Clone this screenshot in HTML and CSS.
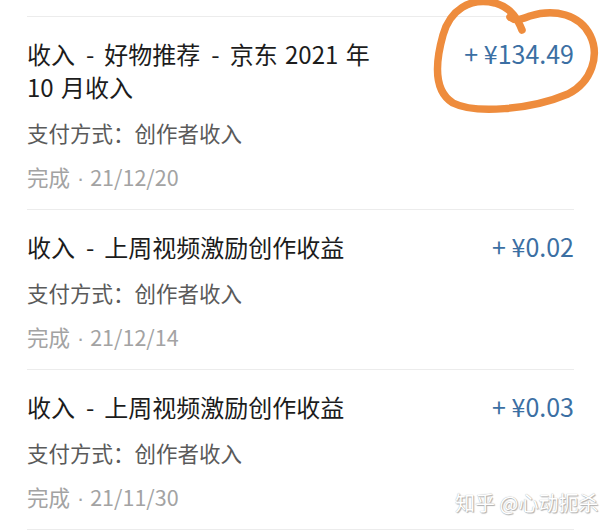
FILE: index.html
```html
<!DOCTYPE html>
<html lang="zh-CN">
<head>
<meta charset="utf-8">
<link rel="stylesheet" href="styles.css">
</head>
<body>
<div class="page">
  <ul class="list">
    <li class="item">
      <div class="row">
        <div class="title">收入<span class="sep">-</span>好物推荐<span class="sep">-</span>京东 2021 年<br>10 月收入</div>
        <div class="amount">+ ¥134.49</div>
      </div>
      <div class="sub">支付方式：创作者收入</div>
      <div class="date">完成<span class="dot">·</span>21/12/20</div>
    </li>
    <li class="item">
      <div class="row">
        <div class="title">收入<span class="sep">-</span>上周视频激励创作收益</div>
        <div class="amount">+ ¥0.02</div>
      </div>
      <div class="sub">支付方式：创作者收入</div>
      <div class="date">完成<span class="dot">·</span>21/12/14</div>
    </li>
    <li class="item">
      <div class="row">
        <div class="title">收入<span class="sep">-</span>上周视频激励创作收益</div>
        <div class="amount">+ ¥0.03</div>
      </div>
      <div class="sub">支付方式：创作者收入</div>
      <div class="date">完成<span class="dot">·</span>21/11/30</div>
    </li>
  </ul>
  <svg class="scribble" width="600" height="120" viewBox="0 0 600 120">
    <path d="M 522 30 C 518 20, 512 8, 495 3 C 470 -3, 450 10, 443 35 C 436 60, 432 90, 453 103 C 475 114, 530 110, 568 94 C 592 82, 600 55, 590 35 C 580 15, 555 8, 530 16 C 522 19, 516 22, 510 17" fill="none" stroke="#ee8c3d" stroke-width="7.5" stroke-linecap="round" stroke-linejoin="round"/>
  </svg>
  <div class="watermark">知乎 @心动扼杀</div>
</div>
</body>
</html>
```
FILE: styles.css
```css
* { box-sizing: border-box; }
html, body {
  margin: 0;
  padding: 0;
  background: #ffffff;
}
body {
  font-family: "Noto Sans CJK SC", "Noto Sans", sans-serif;
  width: 600px;
  height: 530px;
  overflow: hidden;
}
.page {
  position: relative;
  width: 600px;
  height: 530px;
  padding: 16px 26px 0 27px;
}
.list {
  list-style: none;
  margin: 0;
  padding: 0;
  border-top: 1px solid #ececec;
}
.item {
  padding: 20px 0 10px;
  border-bottom: 1px solid #ececec;
}
.row {
  display: flex;
  justify-content: space-between;
  align-items: flex-start;
}
.title {
  font-size: 24px;
  line-height: 33px;
  color: #1c1c1c;
  word-spacing: 2px;
}
.sep {
  padding: 0 10px 0 11px;
}
.amount {
  font-size: 25px;
  line-height: 33px;
  color: #3b6fa3;
  white-space: nowrap;
}
.sub {
  margin-top: 8px;
  font-size: 21.5px;
  line-height: 44px;
  height: 44px;
  color: #5a5a5a;
}
.date {
  font-size: 21.5px;
  line-height: 44px;
  height: 44px;
  color: #a3a3a3;
}
.dot {
  padding: 0 6px 0 7px;
  line-height: 0;
  font-family: "Liberation Sans", sans-serif;
}
.scribble {
  position: absolute;
  left: 0;
  top: 0;
}
.watermark {
  position: absolute;
  left: 455px;
  top: 490px;
  font-size: 20px;
  line-height: 26px;
  color: #ffffff;
  text-shadow: 0 0 1px #9a9a9a, 1px 1px 1px #b0b0b0;
}
```
